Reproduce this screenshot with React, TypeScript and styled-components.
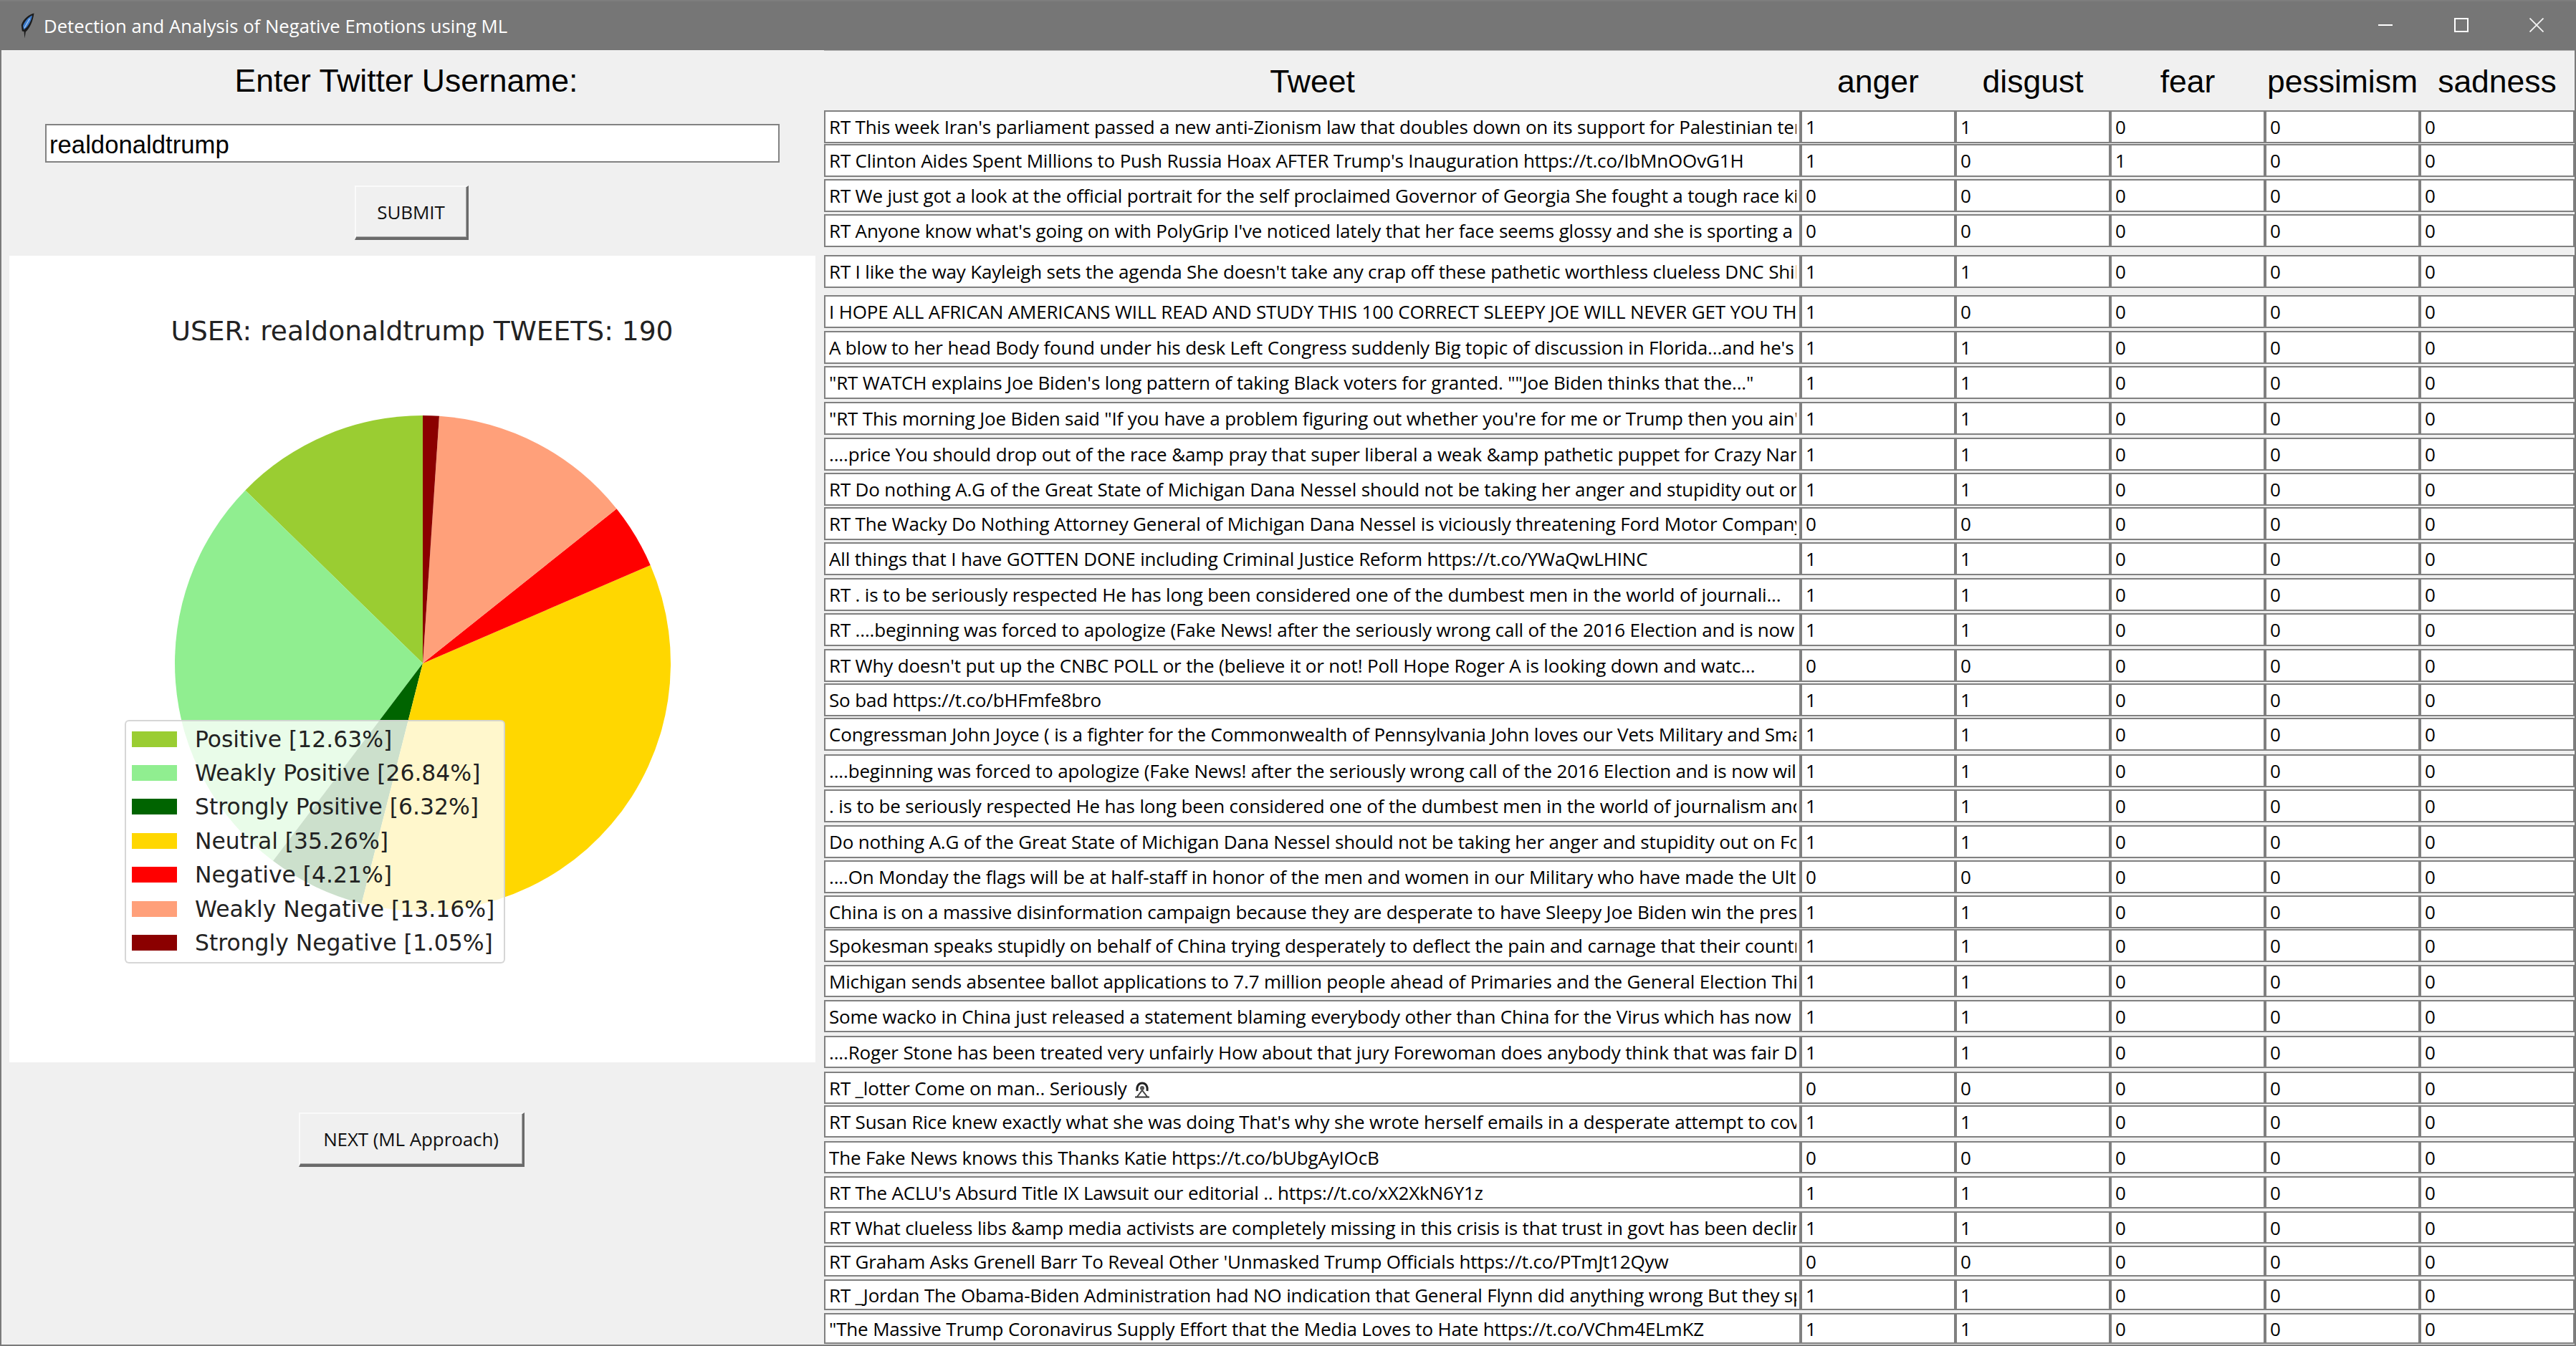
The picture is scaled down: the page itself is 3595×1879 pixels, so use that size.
import React from 'react';
import styled, { createGlobalStyle } from 'styled-components';

const GlobalStyle = createGlobalStyle`
  html, body { margin: 0; padding: 0; overflow: hidden; background: #f0f0f0; }
`;

const Window = styled.div`
  width: 3595px;
  height: 1879px;
  display: flex;
  flex-direction: column;
  overflow: hidden;
`;

const TitleBar = styled.header`
  height: 70px;
  flex: none;
  box-sizing: border-box;
  display: flex;
  align-items: center;
  background: #767676;
  border-top: 2px solid #7e7e7e;
  padding: 0 2px 0 29px;
`;

const Feather = styled.svg`
  width: 20px;
  height: 36px;
  flex: none;
  margin-right: 12px;
`;

const WindowTitle = styled.span`
  flex: 1;
  padding-top: 2px;
  font: 25.7px/34px "Open Sans", sans-serif;
  color: #ffffff;
`;

const Controls = styled.div`
  display: flex;
  margin-bottom: 2px;
`;

const ControlButton = styled.div`
  width: 105.5px;
  height: 20px;
  display: flex;
  justify-content: center;
`;

const Body = styled.main`
  flex: 1;
  min-height: 0;
  display: flex;
  background: #f0f0f0;
  border-left: 2px solid #7a7a7a;
  border-right: 2px solid #7a7a7a;
  border-bottom: 2px solid #7a7a7a;
`;

const LeftPanel = styled.section`
  width: 1148px;
  flex: none;
  display: flex;
  flex-direction: column;
  align-items: center;
`;

const Prompt = styled.h1`
  margin: 0;
  width: 100%;
  box-sizing: border-box;
  padding: 4px 18px 0 0;
  height: 82px;
  font: 400 44.5px/78px "Liberation Sans", Arial, sans-serif;
  color: #000;
  text-align: center;
`;

const UsernameInput = styled.input`
  align-self: flex-start;
  margin: 21px 0 0 61px;
  width: 1025px;
  height: 54px;
  box-sizing: border-box;
  border: 2px solid #828282;
  background: #fff;
  padding: 4px 0 0 4px;
  outline: none;
  font: 34.7px "Liberation Sans", Arial, sans-serif;
  color: #000;
`;

const RaisedButton = styled.button<{ $width: number; $top: number }>`
  flex: none;
  width: ${p => p.$width}px;
  height: 76px;
  margin: ${p => p.$top}px 4px 0 0;
  box-sizing: border-box;
  padding: 0;
  background: #f0f0f0;
  border-style: solid;
  border-width: 2px 3px 4px 2px;
  border-color: #fafafa #6a6a6a #6a6a6a #fafafa;
  box-shadow: inset -1px -1px 0 #a8a8a8;
  font: 26px "Open Sans", sans-serif;
  letter-spacing: -0.1px;
  color: #111;
`;

const ChartPanel = styled.figure`
  position: relative;
  align-self: flex-start;
  margin: 22px 0 0 11px;
  width: 1125px;
  height: 1126px;
  background: #fff;
`;

const ChartTitle = styled.figcaption`
  height: 210px;
  box-sizing: border-box;
  padding-left: 27px;
  font: 37.6px/210px "DejaVu Sans", sans-serif;
  color: #222;
  text-align: center;
`;

const Pie = styled.svg`
  display: block;
  width: 700px;
  height: 700px;
  margin: 9px 0 0 227px;
`;

const Legend = styled.ul`
  position: absolute;
  left: 161px;
  top: 648px;
  width: 531px;
  height: 340px;
  box-sizing: border-box;
  margin: 0;
  padding: 1px 8px;
  list-style: none;
  border: 2px solid rgba(204, 204, 204, 0.8);
  border-radius: 6px;
  background: rgba(255, 255, 255, 0.8);
`;

const LegendRow = styled.li`
  height: 47.4px;
  display: flex;
  align-items: center;
  gap: 25px;
  font: 31.4px "DejaVu Sans", sans-serif;
  color: #222;
  white-space: nowrap;
`;

const Swatch = styled.i<{ $color: string }>`
  width: 63px;
  height: 22px;
  flex: none;
  background: ${p => p.$color};
`;

const RightPanel = styled.section`
  flex: 1;
  min-width: 0;
  display: flex;
  flex-direction: column;
  box-shadow: inset 0 1px 0 #b4b4b4;
`;

const grid = `
  display: grid;
  grid-template-columns: 1363px repeat(5, 216px);
`;

const HeaderRow = styled.div`
  ${grid}
  height: 84px;
  flex: none;
`;

const HeaderCell = styled.div`
  padding-top: 2px;
  font: 44.5px/84px "Liberation Sans", Arial, sans-serif;
  color: #000;
  text-align: center;
`;

const TweetRow = styled.div<{ $gap: number; $height: number }>`
  ${grid}
  flex: none;
  height: ${p => p.$height}px;
  margin-top: ${p => p.$gap}px;
`;

const Cell = styled.div`
  box-sizing: border-box;
  min-width: 0;
  border: 2px solid #808080;
  background: #fff;
  padding: 0 4px 0 5px;
  display: flex;
  align-items: center;
  overflow: clip;
  overflow-clip-margin: content-box;
  font: 26px "Open Sans", sans-serif;
  letter-spacing: -0.17px;
  color: #000;
  white-space: pre;
`;

const Glyph = styled.svg`
  width: 24px;
  height: 23px;
  flex: none;
  margin: 6px 0 0 9px;
`;

const LABELS = ['Tweet', 'anger', 'disgust', 'fear', 'pessimism', 'sadness'];

const SLICES: [string, number, string][] = [
  ['Positive', 12.63, '#9ACD32'],
  ['Weakly Positive', 26.84, '#90EE90'],
  ['Strongly Positive', 6.32, '#006400'],
  ['Neutral', 35.26, '#FFD700'],
  ['Negative', 4.21, '#FF0000'],
  ['Weakly Negative', 13.16, '#FFA07A'],
  ['Strongly Negative', 1.05, '#8B0000'],
];

const TOPS = [154, 201, 250, 299, 356, 412, 462, 511, 561, 611, 660, 708, 757, 807, 856, 906, 954, 1002, 1053, 1102, 1152, 1201, 1250, 1297, 1347, 1396, 1446, 1496, 1543, 1593, 1642, 1691, 1739, 1786, 1833];

const TWEETS: [string, string][] = [
  ["RT This week Iran's parliament passed a new anti-Zionism law that doubles down on its support for Palestinian terrorism", '11000'],
  ["RT Clinton Aides Spent Millions to Push Russia Hoax AFTER Trump's Inauguration https://t.co/IbMnOOvG1H", '10100'],
  ['RT We just got a look at the official portrait for the self proclaimed Governor of Georgia She fought a tough race ki...', '00000'],
  ["RT Anyone know what's going on with PolyGrip I've noticed lately that her face seems glossy and she is sporting a ...", '00000'],
  ["RT I like the way Kayleigh sets the agenda She doesn't take any crap off these pathetic worthless clueless DNC Shill", '11000'],
  ['I HOPE ALL AFRICAN AMERICANS WILL READ AND STUDY THIS 100 CORRECT SLEEPY JOE WILL NEVER GET YOU THE', '10000'],
  ["A blow to her head Body found under his desk Left Congress suddenly Big topic of discussion in Florida...and he's in", '11000'],
  ['"RT WATCH explains Joe Biden\'s long pattern of taking Black voters for granted. ""Joe Biden thinks that the..."', '11000'],
  ['"RT This morning Joe Biden said "If you have a problem figuring out whether you\'re for me or Trump then you ain\'t', '11000'],
  ['....price You should drop out of the race &amp pray that super liberal a weak &amp pathetic puppet for Crazy Nancy', '11000'],
  ['RT Do nothing A.G of the Great State of Michigan Dana Nessel should not be taking her anger and stupidity out on', '11000'],
  ['RT The Wacky Do Nothing Attorney General of Michigan Dana Nessel is viciously threatening Ford Motor Company', '00000'],
  ['All things that I have GOTTEN DONE including Criminal Justice Reform https://t.co/YWaQwLHINC', '11000'],
  ['RT . is to be seriously respected He has long been considered one of the dumbest men in the world of journali...', '11000'],
  ['RT ....beginning was forced to apologize (Fake News! after the seriously wrong call of the 2016 Election and is now', '11000'],
  ["RT Why doesn't put up the CNBC POLL or the (believe it or not! Poll Hope Roger A is looking down and watc...", '00000'],
  ['So bad https://t.co/bHFmfe8bro', '11000'],
  ['Congressman John Joyce ( is a fighter for the Commonwealth of Pennsylvania John loves our Vets Military and Small', '11000'],
  ['....beginning was forced to apologize (Fake News! after the seriously wrong call of the 2016 Election and is now will', '11000'],
  ['. is to be seriously respected He has long been considered one of the dumbest men in the world of journalism and', '11000'],
  ['Do nothing A.G of the Great State of Michigan Dana Nessel should not be taking her anger and stupidity out on Ford', '11000'],
  ['....On Monday the flags will be at half-staff in honor of the men and women in our Military who have made the Ultimate', '00000'],
  ['China is on a massive disinformation campaign because they are desperate to have Sleepy Joe Biden win the presidential', '11000'],
  ['Spokesman speaks stupidly on behalf of China trying desperately to deflect the pain and carnage that their country', '11000'],
  ['Michigan sends absentee ballot applications to 7.7 million people ahead of Primaries and the General Election This', '11000'],
  ['Some wacko in China just released a statement blaming everybody other than China for the Virus which has now killed', '11000'],
  ['....Roger Stone has been treated very unfairly How about that jury Forewoman does anybody think that was fair DISGRACE', '11000'],
  ['RT _lotter Come on man.. Seriously', '00000'],
  ["RT Susan Rice knew exactly what she was doing That's why she wrote herself emails in a desperate attempt to cover", '11000'],
  ['The Fake News knows this Thanks Katie https://t.co/bUbgAyIOcB', '00000'],
  ["RT The ACLU's Absurd Title IX Lawsuit our editorial .. https://t.co/xX2XkN6Y1z", '11000'],
  ['RT What clueless libs &amp media activists are completely missing in this crisis is that trust in govt has been declining', '11000'],
  ["RT Graham Asks Grenell Barr To Reveal Other 'Unmasked Trump Officials https://t.co/PTmJt12Qyw", '00000'],
  ['RT _Jordan The Obama-Biden Administration had NO indication that General Flynn did anything wrong But they spied', '11000'],
  ['"The Massive Trump Coronavirus Supply Effort that the Media Loves to Hate https://t.co/VChm4ELmKZ', '11000'],
];

const rowHeight = (i: number) => (i >= 32 ? 43 : i >= 24 ? 45 : 46);

const slicePath = (from: number, to: number) => {
  const r = 346;
  const pt = (a: number) => `${350 + r * Math.cos(a)} ${350 - r * Math.sin(a)}`;
  const large = to - from > Math.PI ? 1 : 0;
  return `M350 350L${pt(from)}A${r} ${r} 0 ${large} 0 ${pt(to)}Z`;
};

const PieChart = () => {
  const total = SLICES.reduce((s, x) => s + x[1], 0);
  let angle = Math.PI / 2;
  return (
    <Pie viewBox="0 0 700 700">
      {SLICES.map(([name, value, color]) => {
        const next = angle + (value / total) * Math.PI * 2;
        const d = slicePath(angle, next);
        angle = next;
        return <path key={name} d={d} fill={color} />;
      })}
    </Pie>
  );
};

export default function App() {
  return (
    <Window>
      <GlobalStyle />
      <TitleBar>
        <Feather viewBox="0 0 20 36">
          <path d="M18.5 0.5C12 2 3.5 8 0.8 17L1.8 25.5L4.5 26L5.5 35.5L6.8 26.5C12 22.5 17 12 18.5 0.5Z" fill="#1b1b1b" />
          <path d="M16 3.5C11 6 5.5 11 3 18L4.2 23.5C10 19.5 14.5 12 16 3.5Z" fill="#3d7ccc" />
          <path d="M12.5 8L5 21" stroke="#a9c9ee" strokeWidth="1.3" fill="none" />
        </Feather>
        <WindowTitle>Detection and Analysis of Negative Emotions using ML</WindowTitle>
        <Controls>
          <ControlButton>
            <svg width="20" height="20" viewBox="0 0 20 20"><path d="M0 10h20" stroke="#fff" strokeWidth="2" /></svg>
          </ControlButton>
          <ControlButton>
            <svg width="20" height="20" viewBox="0 0 20 20"><rect x="1" y="1" width="18" height="18" fill="none" stroke="#fff" strokeWidth="2" /></svg>
          </ControlButton>
          <ControlButton>
            <svg width="20" height="20" viewBox="0 0 20 20"><path d="M0.5 0.5L19.5 19.5M19.5 0.5L0.5 19.5" stroke="#f4f4f4" strokeWidth="1.8" /></svg>
          </ControlButton>
        </Controls>
      </TitleBar>
      <Body>
        <LeftPanel>
          <Prompt>Enter Twitter Username:</Prompt>
          <UsernameInput defaultValue="realdonaldtrump" />
          <RaisedButton $width={159} $top={32}>SUBMIT</RaisedButton>
          <ChartPanel>
            <ChartTitle>USER: realdonaldtrump TWEETS: 190</ChartTitle>
            <PieChart />
            <Legend>
              {SLICES.map(([name, value, color]) => (
                <LegendRow key={name}>
                  <Swatch $color={color} />
                  {name} [{value.toFixed(2)}%]
                </LegendRow>
              ))}
            </Legend>
          </ChartPanel>
          <RaisedButton $width={315} $top={70}>NEXT (ML Approach)</RaisedButton>
        </LeftPanel>
        <RightPanel>
          <HeaderRow>
            {LABELS.map(l => <HeaderCell key={l}>{l}</HeaderCell>)}
          </HeaderRow>
          {TWEETS.map(([text, flags], i) => (
            <TweetRow
              key={i}
              $height={rowHeight(i)}
              $gap={i === 0 ? 0 : TOPS[i] - TOPS[i - 1] - rowHeight(i - 1)}
            >
              <Cell>
                {text}
                {i === 27 && (
                  <Glyph viewBox="0 0 24 23">
                    <path d="M5 13C4 5 8 2 12 2C16 2 20 5 19 13" fill="none" stroke="#222" strokeWidth="3" />
                    <circle cx="12" cy="9" r="3" fill="#555" />
                    <path d="M12 12L5 21M12 12L19 21" stroke="#444" strokeWidth="2" fill="none" />
                    <path d="M2 21.5H22" stroke="#333" strokeWidth="2" />
                  </Glyph>
                )}
              </Cell>
              {flags.split('').map((f, j) => <Cell key={j}>{f}</Cell>)}
            </TweetRow>
          ))}
        </RightPanel>
      </Body>
    </Window>
  );
}
